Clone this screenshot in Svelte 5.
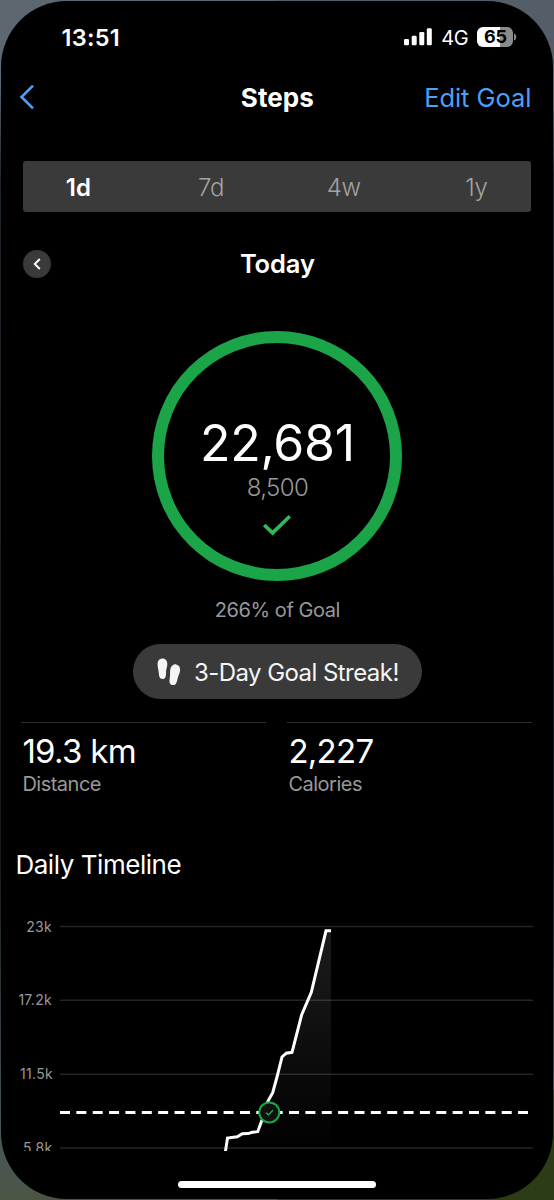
<script lang="ts">
    const ranges = ["1d", "7d", "4w", "1y"];
    let range = $state("1d");

    const stats = [
        { value: "19.3 km", label: "Distance" },
        { value: "2,227", label: "Calories" },
    ];

    const ticks = [
        { label: "23k", y: 16.5, x: 52 },
        { label: "17.2k", y: 90.3, x: 52 },
        { label: "11.5k", y: 164.2, x: 53 },
        { label: "5.8k", y: 238, x: 52.5 },
    ];

    const points = [
        [225.2, 243], [227.5, 228], [237.3, 226.8], [242.3, 223.8],
        [248, 223.6], [252.3, 222.3], [257.7, 221.7], [262, 210],
        [268, 191], [272.7, 182.7], [277, 167], [282, 147],
        [286.3, 143.2], [292, 142.3], [301.7, 104.7], [311.3, 82.3],
        [326, 20.8], [331, 20.8],
    ];
    const line = points.map((p) => p.join(",")).join(" ");
    const area = `${line} 331,241 225,241`;
</script>

<main class="phone">
    <div class="status">
        <span class="time">13:51</span>
        <div class="signals">
            <svg class="bars" width="28" height="18" viewBox="0 0 28 18">
                <rect x="0" y="11" width="5" height="6.3" rx="1.2" />
                <rect x="7.7" y="7.7" width="5" height="9.6" rx="1.2" />
                <rect x="15.3" y="4" width="5" height="13.3" rx="1.2" />
                <rect x="22.8" y="0.3" width="5" height="17" rx="1.2" />
            </svg>
            <span class="network">4G</span>
            <div class="battery"><span>65</span></div>
            <svg class="cap" width="3" height="8" viewBox="0 0 3 8">
                <path d="M0 0.5C3 1.5 3 6.5 0 7.5Z" />
            </svg>
        </div>
    </div>

    <header>
        <button class="back" aria-label="Back">
            <svg width="16" height="26" viewBox="0 0 16 26">
                <path d="M15 1.6L3.5 13L15 24.4" />
            </svg>
        </button>
        <h1>Steps</h1>
        <button class="edit">Edit Goal</button>
    </header>

    <nav class="ranges">
        {#each ranges as r}
            <button class:active={r === range} onclick={() => (range = r)}>{r}</button>
        {/each}
    </nav>

    <div class="day">
        <button class="prev" aria-label="Previous day">
            <svg width="10" height="14" viewBox="0 0 10 14">
                <path d="M7.8 2L2.8 7L7.8 12" />
            </svg>
        </button>
        <h2>Today</h2>
    </div>

    <section class="ring">
        <span class="count">22,681</span>
        <span class="goal">8,500</span>
        <svg width="30" height="22" viewBox="0 0 30 22">
            <path d="M2.2 11L10.6 18.9L27.8 2.2" />
        </svg>
    </section>
    <p class="percent">266% of Goal</p>

    <div class="streak">
        <svg width="24" height="28" viewBox="0 0 24 28">
            <path d="M5.2 0.4C8.6 0.2 10.3 2.8 10.3 6C10.3 9.5 8.9 11 9 14.4C9.1 18 8.5 21 5.6 21C2.5 21 2.1 18.2 1.8 15C1.5 11.5 0.6 9.4 0.6 6.2C0.6 3 2.2 0.6 5.2 0.4Z" />
            <path d="M19.1 6.4C22 6.9 23.5 9.4 23.1 12.6C22.7 15.7 21.3 17.6 20.5 20.9C19.8 24.2 19 27.3 15.8 27.1C12.5 26.8 12.1 23.9 12.7 20.7C13.3 17.5 12.8 15.5 13.2 12.2C13.6 8.8 15.9 6 19.1 6.4Z" />
        </svg>
        <span>3-Day Goal Streak!</span>
    </div>

    <section class="stats">
        {#each stats as stat}
            <div class="stat">
                <span class="value">{stat.value}</span>
                <span class="label">{stat.label}</span>
            </div>
        {/each}
    </section>

    <h3>Daily Timeline</h3>

    <svg class="chart" width="554" height="241" viewBox="0 0 554 241">
        <defs>
            <linearGradient id="fade" x1="0" y1="0" x2="0" y2="1">
                <stop offset="0" stop-color="#fff" stop-opacity="0.11" />
                <stop offset="1" stop-color="#fff" stop-opacity="0" />
            </linearGradient>
        </defs>
        {#each ticks as tick}
            <text x={tick.x} y={tick.y + 5} text-anchor="end">{tick.label}</text>
            <line class="grid" x1="60" x2="533" y1={tick.y} y2={tick.y} />
        {/each}
        <polygon points={area} fill="url(#fade)" />
        <line class="target" x1="60" x2="528" y1="202.4" y2="202.4" />
        <polyline points={line} />
        <circle cx="269.3" cy="202.4" r="10" />
        <path class="tick" d="M266 202.6L268.4 205L273 200.2" />
    </svg>

    <div class="home"></div>
</main>

<style>
    :global(body) {
        display: flow-root;
        background:
            linear-gradient(90deg, transparent 50%, #535e68 50%) top / 100% 110px no-repeat,
            linear-gradient(90deg, transparent 50%, #2c3c17 50%) bottom / 100% 110px no-repeat,
            linear-gradient(#5c6770 0, #5c6770 80px, #20272c 180px, #14181b 850px, #48555b 1130px, #4c5543 1200px);
    }

    .phone {
        box-sizing: border-box;
        width: 552px;
        height: 1198px;
        margin: 1px 1px 1px 1.4px;
        border-radius: 66px;
        background: #000;
        color: #fff;
        font-family: Inter, "Liberation Sans", sans-serif;
        display: flex;
        flex-direction: column;
        overflow: hidden;
    }

    button {
        border: 0;
        padding: 0;
        background: none;
        color: inherit;
        font: inherit;
    }

    h1, h2, h3, p {
        margin: 0;
    }

    svg {
        display: block;
        fill: none;
    }

    .status {
        height: 72px;
        padding: 0 36px 0 60px;
        display: flex;
        align-items: center;
        justify-content: space-between;
    }

    .time {
        font-size: 23.5px;
        font-weight: 600;
        letter-spacing: 0.3px;
    }

    .signals {
        display: flex;
        align-items: center;
    }

    .bars {
        fill: #fff;
    }

    .network {
        margin: 0 9px;
        padding-top: 2px;
        font-size: 20px;
        letter-spacing: -0.3px;
    }

    .battery {
        width: 36px;
        height: 20px;
        border-radius: 6px;
        background: linear-gradient(90deg, #fff 65%, #8b8b8b 65%);
        color: #000;
        font-size: 18px;
        font-weight: 700;
        line-height: 20px;
        text-align: center;
        letter-spacing: -0.3px;
    }

    .cap {
        margin-left: 1px;
        fill: #8b8b8b;
    }

    header {
        height: 48px;
        padding: 0 22px 0 17px;
        display: grid;
        grid-template-columns: 1fr auto 1fr;
        align-items: center;
    }

    .back path {
        stroke: #4ba0f8;
        stroke-width: 2.6;
    }

    h1 {
        margin-left: 5px;
        font-size: 26px;
        font-weight: 700;
        letter-spacing: 0.1px;
    }

    .edit {
        justify-self: end;
        color: #4ba0f8;
        font-size: 25.5px;
        letter-spacing: -0.05px;
    }

    .ranges {
        height: 51px;
        margin: 40px 22px 0;
        border-radius: 3px;
        background: #3a3a3a;
        display: flex;
        justify-content: space-between;
    }

    .ranges button {
        width: 110px;
        padding-top: 1px;
        color: #a3a3a3;
        font-size: 24px;
        font-weight: 350;
        letter-spacing: -0.3px;
    }

    .ranges .active {
        color: #fff;
        font-weight: 600;
        letter-spacing: 0.2px;
    }

    .day {
        height: 28px;
        margin: 37px 22px 0;
        display: grid;
        grid-template-columns: 28px 1fr 28px;
        align-items: center;
        text-align: center;
    }

    .prev {
        width: 28px;
        height: 28px;
        border-radius: 50%;
        background: #3a3a3a;
        display: grid;
        place-items: center;
    }

    .prev path {
        stroke: #fff;
        stroke-width: 2;
    }

    h2 {
        padding-top: 1px;
        font-size: 25.5px;
        font-weight: 600;
        line-height: 28px;
        letter-spacing: -0.1px;
    }

    .ring {
        box-sizing: border-box;
        width: 250px;
        height: 250px;
        margin: 54px auto 0;
        padding-top: 75px;
        border: 12px solid #1ba548;
        border-radius: 50%;
        display: flex;
        flex-direction: column;
        align-items: center;
    }

    .count {
        font-size: 50px;
        line-height: 50px;
        letter-spacing: -0.3px;
    }

    .goal {
        margin-top: 5px;
        color: #999;
        font-size: 24px;
        font-weight: 350;
        line-height: 30px;
        letter-spacing: -0.6px;
    }

    .ring svg {
        margin-top: 11px;
    }

    .ring path {
        stroke: #2dbb58;
        stroke-width: 3.6;
    }

    .percent {
        margin-top: 17px;
        color: #999;
        font-size: 20px;
        line-height: 24px;
        text-align: center;
        letter-spacing: -0.45px;
    }

    .streak {
        box-sizing: border-box;
        width: 289px;
        height: 55px;
        margin: 22px auto 0;
        padding-left: 24px;
        border-radius: 28px;
        background: #3a3a3a;
        display: flex;
        align-items: center;
        gap: 13px;
        color: #f5f5f5;
        font-size: 24px;
        line-height: 30px;
        white-space: nowrap;
        letter-spacing: -0.55px;
    }

    .streak svg {
        flex: none;
        fill: #f5f5f5;
    }

    .streak span {
        padding-top: 2px;
    }

    .stats {
        margin: 23px 21px 0 20px;
        display: grid;
        grid-template-columns: 1fr 1fr;
        gap: 21px;
    }

    .stat {
        border-top: 1px solid #303030;
        padding: 8px 0 0 1px;
        display: flex;
        flex-direction: column;
    }

    .value {
        font-size: 33px;
        line-height: 40px;
        letter-spacing: -0.7px;
    }

    .label {
        margin-top: 1px;
        color: #999;
        font-size: 20px;
        line-height: 24px;
        letter-spacing: -0.5px;
    }

    h3 {
        margin: 53px 0 0 14px;
        font-size: 26px;
        font-weight: 400;
        line-height: 32px;
        letter-spacing: -0.45px;
    }

    .chart {
        flex: none;
        margin: 29px 0 0 -1.4px;
    }

    .chart text {
        fill: #999;
        font-size: 14px;
        letter-spacing: 0.3px;
    }

    .grid {
        stroke: #252525;
        stroke-width: 1.4;
    }

    .target {
        stroke: #fff;
        stroke-width: 3;
        stroke-dasharray: 10 6.36;
    }

    polyline {
        stroke: #fff;
        stroke-width: 3;
    }

    circle {
        fill: #111;
        stroke: #1ba548;
        stroke-width: 2;
    }

    .tick {
        stroke: #2dbb58;
        stroke-width: 1.2;
    }

    .home {
        flex: none;
        width: 198px;
        height: 7px;
        margin: 30px auto 0;
        border-radius: 4px;
        background: #fff;
    }
</style>
